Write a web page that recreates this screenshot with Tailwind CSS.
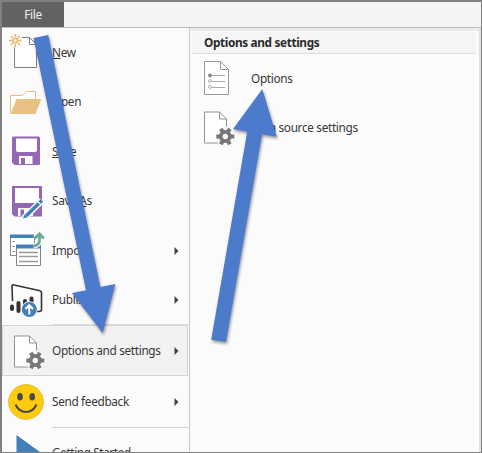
<!DOCTYPE html>
<html lang="en">
<head>
<meta charset="utf-8">
<title>File menu</title>
<script src="https://cdn.jsdelivr.net/npm/@tailwindcss/browser@4"></script>
</head>
<body class="w-[482px] h-[453px] overflow-hidden font-['Noto_Sans',sans-serif] text-[11.8px] tracking-[-0.33px] text-[#383838]">
<svg class="hidden">
  <defs>
    <g id="gear">
      <circle r="4.6" fill="none" stroke="#777" stroke-width="3.6"/>
      <g stroke="#777" stroke-width="4">
        <path d="M-9 0H-5M5 0H9"/>
        <path d="M-9 0H-5M5 0H9" transform="rotate(60)"/>
        <path d="M-9 0H-5M5 0H9" transform="rotate(120)"/>
      </g>
    </g>
    <g id="page-gear">
      <path d="M14.500 20.500H29.500L36.500 27.500V51.500H14.500Z" fill="#fff" stroke="#929292"/>
      <path d="M29.500 20.500V27.500H36.500" fill="none" stroke="#929292"/>
      <circle cx="35.300" cy="45" r="10" fill="#f8f8f8"/>
      <use href="#gear" x="35.300" y="45"/>
    </g>
  </defs>
</svg>
<div class="relative flex flex-col w-[482px] h-[453px] overflow-hidden bg-[#fbfbfb] border-t-2 border-l-2 border-r border-b border-[#808080]">
  <header class="flex shrink-0 h-[26px] bg-[#f4f4f4] border-b border-[#bcbcbc]">
    <div class="w-[62px] h-[25px] flex items-center justify-center bg-[#626262] text-[#f2f2f2]">File</div>
  </header>
  <main class="flex flex-1 min-h-0">
    <nav class="w-[188px] shrink-0 flex flex-col overflow-hidden border-r border-[#c8c8c8]">
      <div class="flex shrink-0 h-[49.5px] items-center">
        <svg class="w-[50px] h-[49px] shrink-0" viewBox="2 28 50 49" fill="none">
          <path d="M14.500 47V67.500H36.500V44.500L29.500 37.500H22" stroke="#7d7d7d" fill="#fff"/>
          <path d="M29.500 37.500V44.500H36.500" stroke="#7d7d7d"/>
          <circle cx="15.300" cy="40.500" r="7" fill="#fbfbfb"/>
          <circle cx="15.300" cy="40.500" r="2.300" stroke="#e8b568" stroke-width="1.500"/>
          <path d="M15.300 34V37M15.300 44V47M9 40.500H12M18.500 40.500H21.500M10.800 36L13 38.200M17.600 42.800L19.800 45M10.800 45L13 42.800M17.600 38.200L19.800 36" stroke="#e8b568" stroke-width="1.400"/>
        </svg>
        <span><u>N</u>ew</span>
      </div>
      <div class="flex shrink-0 h-[49.5px] items-center">
        <svg class="w-[50px] h-[49px] shrink-0" viewBox="2 77 50 49">
          <path d="M10.500 112V94.500H22.500L26.500 90.500H35.500V98" fill="#fff" stroke="#e3bd7d"/>
          <path d="M16.500 98H41.300L35.500 113H10.500Z" fill="#e8c083"/>
        </svg>
        <span><u>O</u>pen</span>
      </div>
      <div class="flex shrink-0 h-[49.5px] items-center">
        <svg class="w-[50px] h-[49px] shrink-0" viewBox="2 127 50 49">
          <path d="M13.500 136.500H38.500Q40 136.500 40 138V163.500Q40 165 38.500 165H14.500L12 162.500V138Q12 136.500 13.500 136.500Z" fill="#9565b6"/>
          <path d="M16 138.500H37V150Q37 152 35 152H18Q16 152 16 150Z" fill="#fff"/>
          <path d="M19 156H32.500V164H19Z" fill="#fff"/>
          <path d="M21 158H25V164H21Z" fill="#9565b6"/>
        </svg>
        <span><u>S</u>ave</span>
      </div>
      <div class="flex shrink-0 h-[49.5px] items-center">
        <svg class="w-[50px] h-[49px] shrink-0" viewBox="2 176 50 49">
          <path d="M12 185H42V215.500H14.500L12 213Z" fill="#9565b6"/>
          <path d="M15 187H39V202H15ZM18 207H33V215H18Z" fill="#fff"/>
          <path d="M20.500 208.500H24V215H20.500Z" fill="#9565b6"/>
          <path d="M24 217L42 199.500" stroke="#fbfbfb" stroke-width="6.500"/>
          <path d="M26 215L38.800 202.500M39.700 201.600L42 199.500" stroke="#4280b9" stroke-width="3.500"/>
          <path d="M23 217.500L24.600 213.600L27.200 216.200Z" fill="#4280b9"/>
        </svg>
        <span>Save <u>A</u>s</span>
      </div>
      <div class="flex shrink-0 h-[49.5px] items-center">
        <svg class="w-[50px] h-[49px] shrink-0" viewBox="2 226 50 49" fill="none">
          <path d="M10.500 235.500H34.500V255.500H10.500Z" fill="#fff" stroke="#8a8a8a"/>
          <path d="M10 234.500H34V238H10Z" fill="#4280b9"/>
          <path d="M12.500 241.500H15M12.500 246.500H15M12.500 251.500H15" stroke="#888"/>
          <path d="M16.500 245.500H40.500V265.500H16.500Z" fill="#fff" stroke="#858585"/>
          <path d="M16 244.500H41V248.500H16Z" fill="#4280b9"/>
          <path d="M19 252.500H38M19 256.500H38M19 261.500H38" stroke="#9a9a9a" stroke-width="1.300"/>
          <path d="M33.500 246Q39.500 245.500 39.500 240V235M35 238L39.500 233.500L44 238" stroke="#fbfbfb" stroke-width="5"/>
          <path d="M33.500 246Q39.500 245.500 39.500 240V235M34.500 238.500L39.500 233.800L43.800 238.500" stroke="#70aa96" stroke-width="2.800"/>
        </svg>
        <span class="flex-1">Import</span>
        <svg class="w-[5px] h-[8px] mr-[10px]" viewBox="0 0 5 8"><path d="M0.500 0L4.500 4L0.500 8Z" fill="#444"/></svg>
      </div>
      <div class="flex shrink-0 h-[49.5px] items-center">
        <svg class="w-[50px] h-[49px] shrink-0" viewBox="2 275 50 49" fill="none">
          <path d="M12.500 300L12 285Q12 283.500 14 284L39 289.500Q41.500 290 41.500 292V308.500Q41.500 310.500 39 310.500H37" stroke="#333" stroke-width="1.600"/>
          <path d="M12 305.500V308M18.500 302V310M25 300V305M31.500 297.500V302" stroke="#333" stroke-width="4" stroke-linecap="round"/>
          <circle cx="29.300" cy="308.500" r="8.300" fill="#fbfbfb"/>
          <circle cx="29.300" cy="308.500" r="7.500" fill="#4280b9"/>
          <path d="M29.300 313.500V304.500M25.500 308L29.300 304.200L33.100 308" stroke="#fff" stroke-width="2"/>
        </svg>
        <span class="flex-1">Publish</span>
        <svg class="w-[5px] h-[8px] mr-[10px]" viewBox="0 0 5 8"><path d="M0.500 0L4.500 4L0.500 8Z" fill="#444"/></svg>
      </div>
      <div class="h-px shrink-0 ml-[50px] -mt-px bg-[#dcdcdc]"></div>
      <div class="flex shrink-0 h-[51px] mr-px items-center bg-[#f2f2f2] border border-[#d4d4d4]">
        <svg class="w-[49px] h-[49px] shrink-0" viewBox="3 10.500 49 49"><use href="#page-gear"/></svg>
        <span class="flex-1 whitespace-nowrap">Options and settings</span>
        <svg class="w-[5px] h-[8px] mr-[8px]" viewBox="0 0 5 8"><path d="M0.500 0L4.500 4L0.500 8Z" fill="#444"/></svg>
      </div>
      <div class="flex shrink-0 h-[51px] items-center">
        <svg class="w-[50px] h-[49px] shrink-0" viewBox="2 377 50 49">
          <circle cx="26" cy="402" r="17.500" fill="#fdcb11" stroke="#e4b62b" stroke-width=".7"/>
          <ellipse cx="20" cy="396.800" rx="2.800" ry="3.800" fill="#484848"/>
          <ellipse cx="32.200" cy="396.800" rx="2.800" ry="3.800" fill="#484848"/>
          <path d="M15.500 404.500Q19 412 26 412Q33 412 36.500 404.500" fill="none" stroke="#484848" stroke-width="2"/>
        </svg>
        <span class="flex-1 whitespace-nowrap">Send feedback</span>
        <svg class="w-[5px] h-[8px] mr-[10px]" viewBox="0 0 5 8"><path d="M0.500 0L4.500 4L0.500 8Z" fill="#444"/></svg>
      </div>
      <div class="h-px shrink-0 ml-[50px] bg-[#d4d4d4]"></div>
      <div class="flex shrink-0 h-[49px] items-center">
        <svg class="w-[50px] h-[49px] shrink-0" viewBox="2 428 50 49"><path d="M16.500 435L42 453.500L16.500 472Z" fill="#4280b9"/></svg>
        <span class="whitespace-nowrap tracking-[-0.400px]">Getting Started</span>
      </div>
    </nav>
    <section class="flex-1 min-w-0 border-t-[3px] border-r-2 border-t-[#ebebeb] border-r-[#e0e0e0]">
      <h2 class="ml-[2px] mr-[3px] h-[22px] mt-px pl-[12px] flex items-center bg-[#f5f5f5] border-b border-[#dedede] font-bold text-[#2b2b2b] tracking-[-0.360px]">Options and settings</h2>
      <div class="flex h-[50px] items-center">
        <svg class="w-[61px] h-[50px] shrink-0" viewBox="190 54 61 50" fill="none">
          <path d="M204.500 61.500H220.500L228.500 69.500V94.500H204.500Z" fill="#fff" stroke="#999"/>
          <path d="M220.500 61.500V69.500H228.500" stroke="#999"/>
          <circle cx="210" cy="75.500" r="1.900" fill="#888"/>
          <circle cx="210" cy="81" r="1.400" stroke="#aaa"/>
          <circle cx="210" cy="87" r="1.400" stroke="#aaa"/>
          <path d="M212 75.500H225M212 81.500H225M212 87.500H225" stroke="#aaa"/>
        </svg>
        <span>Options</span>
      </div>
      <div class="flex h-[48px] items-center">
        <svg class="w-[61px] h-[48px] shrink-0" viewBox="0 12.500 61 48"><use href="#page-gear"/></svg>
        <span>Data source settings</span>
      </div>
    </section>
  </main>
  <svg class="absolute -left-[2px] -top-[2px] w-[482px] h-[453px] pointer-events-none" viewBox="0 0 482 453">
    <g fill="#4d7bcb" class="drop-shadow-[1px_2px_1.5px_rgba(0,0,0,0.4)]">
      <path d="M33.500 38L48.300 35L100.300 287L115.300 284L102.700 333L72 293L86 290.300Z"/>
      <path d="M262.300 89L276.700 136.700L262 134.300L226 342L211.200 339.700L247.200 131.700L233 129Z"/>
    </g>
  </svg>
</div>
</body>
</html>
